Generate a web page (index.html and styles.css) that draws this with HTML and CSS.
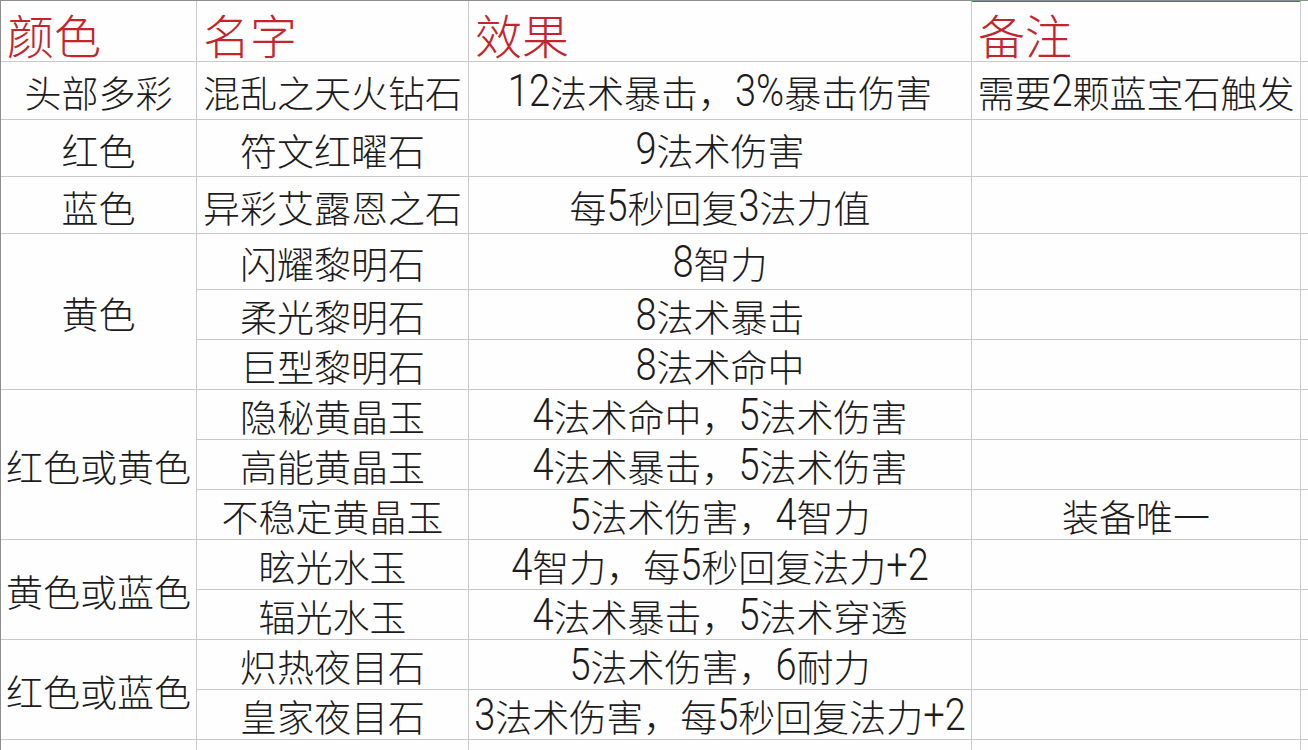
FILE: index.html
```html
<!DOCTYPE html>
<html lang="zh-CN">
<head>
<meta charset="utf-8">
<title>宝石表</title>
<link rel="stylesheet" href="styles.css">
</head>
<body>
<div class="sheet">
  <div class="c h">颜色</div>
  <div class="c h">名字</div>
  <div class="c h">效果</div>
  <div class="c h sel">备注</div>
  <div class="c"></div>

  <div class="c">头部多彩</div>
  <div class="c">混乱之天火钻石</div>
  <div class="c"><span class="n">12</span>法术暴击，<span class="n">3%</span>暴击伤害</div>
  <div class="c">需要<span class="n">2</span>颗蓝宝石触发</div>
  <div class="c"></div>

  <div class="c">红色</div>
  <div class="c">符文红曜石</div>
  <div class="c"><span class="n">9</span>法术伤害</div>
  <div class="c"></div>
  <div class="c"></div>

  <div class="c">蓝色</div>
  <div class="c">异彩艾露恩之石</div>
  <div class="c">每<span class="n">5</span>秒回复<span class="n">3</span>法力值</div>
  <div class="c"></div>
  <div class="c"></div>

  <div class="c span3">黄色</div>
  <div class="c">闪耀黎明石</div>
  <div class="c"><span class="n">8</span>智力</div>
  <div class="c"></div>
  <div class="c"></div>

  <div class="c">柔光黎明石</div>
  <div class="c"><span class="n">8</span>法术暴击</div>
  <div class="c"></div>
  <div class="c"></div>

  <div class="c">巨型黎明石</div>
  <div class="c"><span class="n">8</span>法术命中</div>
  <div class="c"></div>
  <div class="c"></div>

  <div class="c span3">红色或黄色</div>
  <div class="c">隐秘黄晶玉</div>
  <div class="c"><span class="n">4</span>法术命中，<span class="n">5</span>法术伤害</div>
  <div class="c"></div>
  <div class="c"></div>

  <div class="c">高能黄晶玉</div>
  <div class="c"><span class="n">4</span>法术暴击，<span class="n">5</span>法术伤害</div>
  <div class="c"></div>
  <div class="c"></div>

  <div class="c">不稳定黄晶玉</div>
  <div class="c"><span class="n">5</span>法术伤害，<span class="n">4</span>智力</div>
  <div class="c">装备唯一</div>
  <div class="c"></div>

  <div class="c span2">黄色或蓝色</div>
  <div class="c">眩光水玉</div>
  <div class="c"><span class="n">4</span>智力，每<span class="n">5</span>秒回复法力<span class="n">+2</span></div>
  <div class="c"></div>
  <div class="c"></div>

  <div class="c">辐光水玉</div>
  <div class="c"><span class="n">4</span>法术暴击，<span class="n">5</span>法术穿透</div>
  <div class="c"></div>
  <div class="c"></div>

  <div class="c span2">红色或蓝色</div>
  <div class="c">炽热夜目石</div>
  <div class="c"><span class="n">5</span>法术伤害，<span class="n">6</span>耐力</div>
  <div class="c"></div>
  <div class="c"></div>

  <div class="c">皇家夜目石</div>
  <div class="c"><span class="n">3</span>法术伤害，每<span class="n">5</span>秒回复法力<span class="n">+2</span></div>
  <div class="c"></div>
  <div class="c"></div>

  <div class="c"></div>
  <div class="c"></div>
  <div class="c"></div>
  <div class="c"></div>
  <div class="c"></div>
</div>
</body>
</html>
```

FILE: styles.css
```css
html, body {
  margin: 0;
  padding: 0;
  background: #ffffff;
}

body {
  width: 1308px;
  height: 750px;
  overflow: hidden;
  font-family: "Noto Sans CJK SC", "Noto Sans CJK JP", sans-serif;
}

.sheet {
  box-sizing: border-box;
  width: 1308px;
  height: 750px;
  display: grid;
  grid-template-columns: 195px 271px 502px 328px 1fr;
  grid-template-rows: 60px 57px 56px 56px 55px repeat(9, 49px) 1fr;
  gap: 1px;
  background: #c9c9c9;
  border-left: 1px solid #8d8d8d;
  border-top: 1px solid #8d8d8d;
  overflow: hidden;
}

.c {
  background: #fefefe;
  display: flex;
  align-items: center;
  justify-content: center;
  font-size: 37px;
  font-weight: 300;
  color: #1c1c1c;
  white-space: nowrap;
  padding-top: 3px;
  box-sizing: border-box;
  overflow: visible;
}

.h {
  justify-content: flex-start;
  padding-left: 6px;
  padding-top: 4px;
  font-size: 47px;
  color: #c2262c;
}

.sel {
  box-shadow: 0 -1px 0 #2f8a46;
  border-top: 1px solid #2f8a46;
}

.span3 {
  grid-row: span 3;
}

.span2 {
  grid-row: span 2;
}

.n {
  display: inline-block;
  font-family: Roboto, "Liberation Sans", sans-serif;
  font-size: 38px;
  font-weight: 300;
  transform: scaleY(1.18);
  transform-origin: 50% 80%;
  position: relative;
  top: 1px;
}
```
